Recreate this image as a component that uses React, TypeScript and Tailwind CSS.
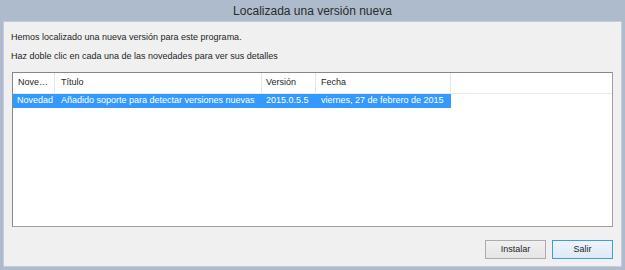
const font = { fontFamily: '"Liberation Sans", "Noto Sans", sans-serif' };

const columns = [
  { key: 'tipo', label: 'Nove…', width: 'w-[42px]', pad: 'pl-[5px]' },
  { key: 'titulo', label: 'Título', width: 'w-[207px]', pad: 'pl-[6px]' },
  { key: 'version', label: 'Versión', width: 'w-[54px]', pad: 'pl-[4px]' },
  { key: 'fecha', label: 'Fecha', width: 'w-[135px]', pad: 'pl-[5px]' },
];

const rows = [
  {
    tipo: 'Novedad',
    titulo: 'Añadido soporte para detectar versiones nuevas',
    version: '2015.0.5.5',
    fecha: 'viernes, 27 de febrero de 2015',
  },
];

export default function App() {
  return (
    <div
      className="w-[625px] h-[270px] bg-[#aebbcd] flex flex-col overflow-hidden"
      style={font}
    >
      <div className="h-[21px] flex items-center justify-center text-[12px] text-[#2b2b2b] pt-[1px]">
        Localizada una versión nueva
      </div>

      <div className="flex-1 mx-[3px] mb-[3px] bg-[#f0f0f0] border border-[#c4ccd8] flex flex-col">
        <div className="pl-[7px] pt-[10px] text-[9px] text-[#1e1e1e] leading-[11px]">
          <p>Hemos localizado una nueva versión para este programa.</p>
          <p className="mt-[8px]">Haz doble clic en cada una de las novedades para ver sus detalles</p>
        </div>

        <div className="mx-[8px] mt-[10px] h-[155px] bg-white border border-[#a0a0a0] border-t-[#828790] border-l-[#828790] text-[9px]">
          <div className="flex h-[21px] border-b border-[#e2e9f3] text-[#1e1e1e]">
            {columns.map((c) => (
              <div
                key={c.key}
                className={`${c.width} ${c.pad} shrink-0 flex items-center border-r border-[#e5e5e5] whitespace-nowrap overflow-hidden`}
              >
                {c.label}
              </div>
            ))}
          </div>
          {rows.map((r) => (
            <div key={r.version} className="flex h-[14px] bg-[#3399ff] text-white w-fit">
              <div className="w-[42px] shrink-0 pl-[4px] flex items-center whitespace-nowrap overflow-hidden">
                {r.tipo}
              </div>
              <div className="w-[207px] shrink-0 pl-[6px] flex items-center whitespace-nowrap overflow-hidden">
                {r.titulo}
              </div>
              <div className="w-[54px] shrink-0 pl-[4px] flex items-center whitespace-nowrap overflow-hidden">
                {r.version}
              </div>
              <div className="w-[135px] shrink-0 pl-[5px] flex items-center whitespace-nowrap overflow-hidden">
                {r.fecha}
              </div>
            </div>
          ))}
        </div>

        <div className="flex justify-end gap-[6px] mr-[8px] mt-[13px] text-[9px] text-[#1e1e1e]">
          <button className="w-[61px] h-[19px] border border-[#acacac] bg-gradient-to-b from-[#f0f0f0] to-[#e5e5e5]">
            Instalar
          </button>
          <button className="w-[61px] h-[19px] border border-[#3c9ce8] bg-gradient-to-b from-[#eef5fc] to-[#dde9f7]">
            Salir
          </button>
        </div>
      </div>
    </div>
  );
}
